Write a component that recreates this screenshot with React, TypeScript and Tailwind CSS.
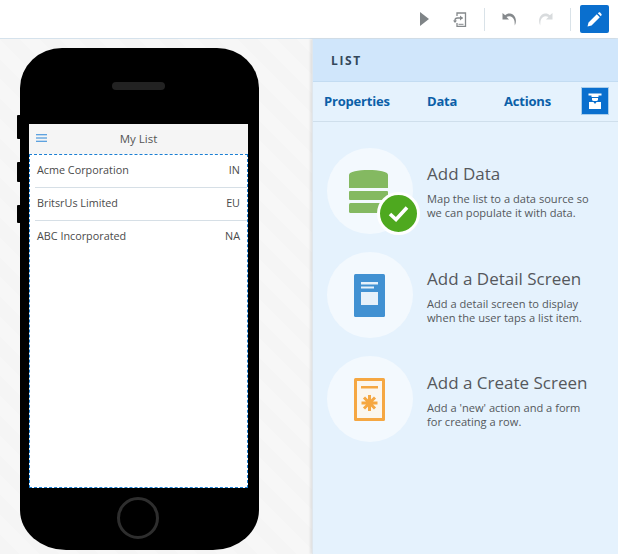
import React from "react";

function Row({ name, code, line = true }: { name: string; code: string; line?: boolean }) {
  return (
    <div
      className={
        line
          ? "h-[33px] flex items-center justify-between ml-[5px] pr-[7px] pl-[2px] border-b border-[#d6dfe6] text-[10.800px] text-[#4a4a4a] pb-[2px]"
          : "h-[33px] flex items-center justify-between ml-[5px] pr-[7px] pl-[2px] text-[10.800px] text-[#4a4a4a] pb-[2px]"
      }
    >
      <span>{name}</span>
      <span>{code}</span>
    </div>
  );
}

function Step({ icon, title, lines, first = false }: { icon: React.ReactNode; title: string; lines: string[]; first?: boolean }) {
  return (
    <div className="flex items-start h-[104px]">
      <div className="w-[86px] h-[86px] rounded-full bg-[#f3f9fe] shrink-0 flex items-center justify-center relative">
        {icon}
      </div>
      <div className={first ? "ml-[14px] pt-[14px]" : "ml-[14px] pt-[15px]"}>
        <div className="text-[17px] leading-[24px] text-[#55585c]">{title}</div>
        <div className="text-[11.100px] leading-[14px] text-[#54585c] mt-[6px] whitespace-nowrap">
          {lines.map((l) => (
            <div key={l}>{l}</div>
          ))}
        </div>
      </div>
    </div>
  );
}

export default function App() {
  return (
    <div className="w-[618px] h-[554px] overflow-hidden bg-white flex flex-col font-['Open_Sans','Noto_Sans',sans-serif]">
      <header className="h-[39px] shrink-0 border-b border-[#d5e2ec] flex items-center justify-end bg-white pr-[9px]">
        <svg width="9" height="14" viewBox="0 0 9 14" className="mr-[23px]">
          <path d="M0 0 L9 7 L0 14 Z" fill="#7f8487" />
        </svg>
        <svg width="15" height="15" viewBox="0 0 15 15" fill="none" className="mr-[17px]">
          <path d="M5 4V1H13.500V14.300H5V11" stroke="#85898c" strokeWidth="1.300" />
          <path d="M10.500 6H5.500C3.500 6 3 7 3 8.500V10" stroke="#85898c" strokeWidth="1.400" />
          <path d="M1 8.500 L3 11 L5 8.500Z M8 3.500V8.500L11 6Z" fill="#85898c" />
          <path d="M6.500 12.300h5" stroke="#85898c" strokeWidth="1" />
        </svg>
        <div className="w-px h-[23px] bg-[#d9e2e8] mr-[17px]" />
        <svg width="15" height="14" viewBox="0 0 15 14" className="mr-[21px]">
          <path d="M0.500 1V7.500H7L4.500 5C7.500 3 11.500 4.500 12.500 9 L12.800 13.500C15.500 8 13 2 8 1.500C6 1.300 4.500 2 3.200 3.300Z" fill="#85898c" />
        </svg>
        <svg width="15" height="14" viewBox="0 0 15 14" className="mr-[17px]">
          <path d="M14.500 1V7.500H8L10.500 5C7.500 3 3.500 4.500 2.500 9 L2.200 13.500C-0.500 8 2 2 7 1.500C9 1.300 10.500 2 11.800 3.300Z" fill="#d8dbdd" />
        </svg>
        <div className="w-px h-[23px] bg-[#d9e2e8] mr-[9px]" />
        <div className="w-[29px] h-[28px] rounded-[2px] bg-[#0a6fce] flex items-center justify-center">
          <svg width="15" height="15" viewBox="0 0 15 15">
            <path d="M0.500 14.500 L1.500 10.500 L9.800 2.200 L12.800 5.200 L4.500 13.500Z M10.800 1.200 L11.800 0.500 C12.300 0.200 12.700 0.200 13.100 0.600 L14.400 1.900 C14.800 2.300 14.800 2.700 14.500 3.200 L13.800 4.200Z" fill="white" />
          </svg>
        </div>
      </header>

      <div className="flex-1 flex min-h-0">
        <main className="w-[312px] shrink-0 bg-[repeating-linear-gradient(45deg,#f5f5f5_0px,#f5f5f5_14px,#f7f7f7_14px,#f7f7f7_28px)] pt-[9px] pl-[20px]">
          <div className="relative w-[239px] h-[502px] bg-black rounded-[42px_42px_46px_46px/40px_40px_40px_40px] flex flex-col items-center">
            <div className="absolute left-[-3px] top-[67px] w-[3px] h-[24px] bg-black rounded-l-[1px]" />
            <div className="absolute left-[-3px] top-[114px] w-[3px] h-[20px] bg-black rounded-l-[1px]" />
            <div className="absolute left-[-3px] top-[157px] w-[3px] h-[18px] bg-black rounded-l-[1px]" />
            <div className="w-[53px] h-[8px] rounded-full bg-[#222222] mt-[34px] ml-[-2px] shrink-0" />
            <div className="w-[219px] h-[364px] bg-white mt-[34px] ml-[9px] shrink-0 flex flex-col self-start">
              <div className="h-[30px] shrink-0 bg-[#f5f5f5] relative flex items-center justify-center text-[11.500px] text-[#555555]">
                <svg width="11" height="8" viewBox="0 0 11 8" className="absolute left-[7px] top-[10px]">
                  <path d="M0 0.750H11M0 4H11M0 7.250H11" stroke="#2b86d8" strokeWidth="1" />
                </svg>
                My List
              </div>
              <div className="flex-1 border border-dashed border-[#1a7fd4]">
                <Row name="Acme Corporation" code="IN" />
                <Row name="BritsrUs Limited" code="EU" />
                <Row name="ABC Incorporated" code="NA" line={false} />
              </div>
            </div>
            <div className="w-[42px] h-[42px] rounded-full border-[3px] border-[#2e2e2e] mt-[9px] ml-[-3px] shrink-0" />
          </div>
        </main>

        <aside className="flex-1 border-l border-[#dfe6ec] bg-[#e5f2fd] flex flex-col shadow-[-2px_0_2px_rgba(0,0,0,0.08)]">
          <div className="h-[43px] shrink-0 bg-[#d0e6fb] border-b border-[#c3dcf2] flex items-center pl-[18px] text-[12px] font-bold tracking-[1.600px] text-[#33475a] pt-[1px]">
            LIST
          </div>
          <div className="h-[40px] shrink-0 border-b border-[#cfdfec] flex items-center pl-[11px] text-[13px] font-bold tracking-[-0.200px] text-[#0b5fa8] relative">
            <span className="w-[103px]">Properties</span>
            <span className="w-[77px]">Data</span>
            <span>Actions</span>
            <div className="absolute left-[268px] top-[5px] w-[28px] h-[28px] bg-[#0a6fce] border border-[#a9cdeb] flex items-center justify-center">
              <svg width="14" height="16" viewBox="0 0 14 16">
                <path d="M0.500 0.500H13.500V2.500H10.500V4H3.500V2.500H0.500Z" fill="white" />
                <path d="M4 5H10V6.500C10 7.500 9 8 7 8C5 8 4 7.500 4 6.500Z" fill="white" />
                <path d="M1 9H5.500L7 11L8.500 9H13V16H1Z" fill="white" />
              </svg>
            </div>
          </div>
          <div className="pt-[26px] pl-[14px] flex flex-col">
            <Step
              first
              title="Add Data"
              lines={["Map the list to a data source so", "we can populate it with data."]}
              icon={
                <>
                  <svg width="39" height="43" viewBox="0 0 39 43" className="mt-[1px] ml-[-3px]">
                    <path d="M0 5C0 1.500 9 0 19.500 0S39 1.500 39 5V18H0Z" fill="#84b961" />
                    <rect x="0" y="21" width="39" height="9" rx="1" fill="#84b961" />
                    <rect x="0" y="33" width="39" height="10" rx="1.500" fill="#84b961" />
                  </svg>
                  <div className="absolute left-[50px] top-[44px] w-[43px] h-[43px] rounded-full bg-[#4ea91f] border-[3px] border-white flex items-center justify-center">
                    <svg width="21" height="17" viewBox="0 0 21 17">
                      <path d="M2 9 L8 14.500 L19 2.500" fill="none" stroke="white" strokeWidth="3.600" />
                    </svg>
                  </div>
                </>
              }
            />
            <Step
              title="Add a Detail Screen"
              lines={["Add a detail screen to display", "when the user taps a list item."]}
              icon={
                <svg width="31" height="43" viewBox="0 0 31 43" className="ml-[-1px]">
                  <rect width="31" height="43" rx="1.500" fill="#4191d2" />
                  <rect x="7" y="8" width="17" height="2.500" fill="#e6f1fa" />
                  <rect x="7" y="12.500" width="13" height="2" fill="#e6f1fa" />
                  <rect x="7" y="18" width="17" height="13" fill="#e6f1fa" />
                </svg>
              }
            />
            <Step
              title="Add a Create Screen"
              lines={["Add a 'new' action and a form", "for creating a row."]}
              icon={
                <svg width="31" height="43" viewBox="0 0 31 43" className="ml-[-1px]">
                  <rect width="31" height="43" rx="1.500" fill="#f5a742" />
                  <rect x="3" y="3" width="25" height="37" fill="#fbf6ee" />
                  <rect x="7" y="8" width="17" height="2.500" fill="#f5a742" />
                  <path d="M15.500 17V33M7.500 25H23.500M10 19.500L21 30.500M21 19.500L10 30.500" stroke="#f5a742" strokeWidth="3" />
                </svg>
              }
            />
          </div>
        </aside>
      </div>
    </div>
  );
}
